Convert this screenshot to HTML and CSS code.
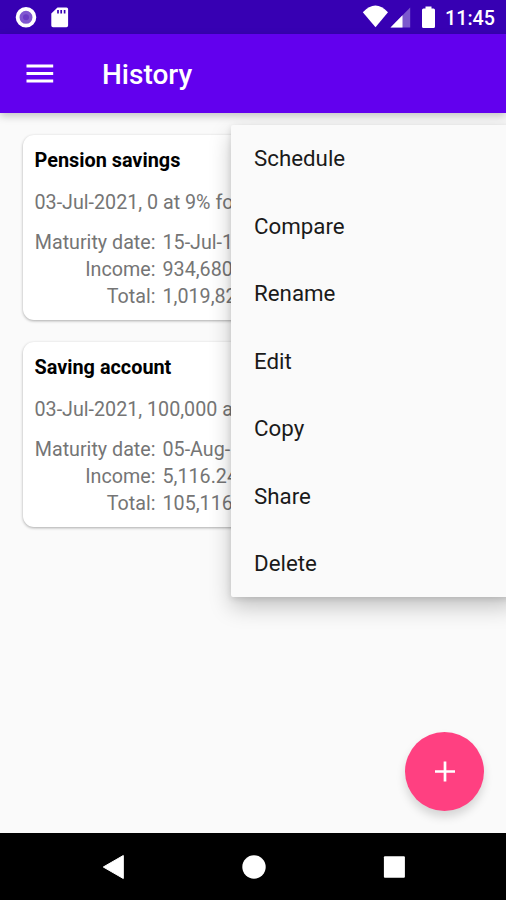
FILE: index.html
```html
<!DOCTYPE html>
<html lang="en">
<head>
<meta charset="utf-8">
<title>History</title>
<link rel="stylesheet" href="styles.css">
</head>
<body>
<div class="screen">
  <div class="status-bar">
    <svg class="status-left" width="56" height="34" viewBox="0 0 56 34">
      <circle cx="11" cy="17.3" r="8.4" fill="#8057d0" stroke="#fff" stroke-width="3.8"/>
      <circle cx="11" cy="17.3" r="3" fill="#6a3bc4"/>
      <path d="M42.500 7.500H51.500a1.600 1.600 0 0 1 1.600 1.600V25.500a1.700 1.700 0 0 1-1.700 1.700H38a1.700 1.700 0 0 1-1.700-1.700V13.500Z" fill="#fff"/>
      <path d="M43 10v3.500M46.200 10v3.500M49.600 10v3.500" stroke="#3700b3" stroke-width="1.700"/>
    </svg>
    <div class="status-right">
      <svg width="76" height="34" viewBox="0 0 76 34">
        <path d="M0.800 12.200Q13.500-1.200 26 12.200L13.500 27.200Z" fill="#fff"/>
        <path d="M48.200 7.500V27.500H28.500Z" fill="#fff" fill-opacity=".35"/>
        <path d="M40.500 15.300V27.500H28.500Z" fill="#fff"/>
        <path d="M63.500 6.500H69.500V8.500H71.500a1.500 1.500 0 0 1 1.500 1.500V26.500a1.500 1.500 0 0 1-1.500 1.500H61.500a1.500 1.500 0 0 1-1.500-1.500V10a1.500 1.500 0 0 1 1.500-1.500H63.500Z" fill="#fff"/>
      </svg>
      <span class="clock">11:45</span>
    </div>
  </div>
  <header class="app-bar">
    <svg class="menu-icon" width="28" height="20" viewBox="0 0 28 20"><path d="M0.500 2H27.200M0.500 9.500H27.200M0.500 17H27.200" stroke="#fff" stroke-width="2.900"/></svg>
    <h1 class="title">History</h1>
  </header>
  <main class="content">
    <section class="card">
      <h2 class="card-title">Pension savings</h2>
      <p class="summary">03-Jul-2021, 0 at 9% for</p>
      <dl class="details">
        <dt>Maturity date:</dt><dd>15-Jul-1</dd>
        <dt>Income:</dt><dd>934,680</dd>
        <dt>Total:</dt><dd>1,019,82</dd>
      </dl>
    </section>
    <section class="card">
      <h2 class="card-title">Saving account</h2>
      <p class="summary">03-Jul-2021, 100,000 at</p>
      <dl class="details">
        <dt>Maturity date:</dt><dd>05-Aug-</dd>
        <dt>Income:</dt><dd>5,116.24</dd>
        <dt>Total:</dt><dd>105,116</dd>
      </dl>
    </section>
  </main>
  <nav class="nav-bar">
    <svg width="24" height="26" viewBox="0 0 24 26"><path d="M1.300 13L21.300 1.500V24.500Z" fill="#fff" stroke="#fff" stroke-linejoin="round"/></svg>
    <svg width="24" height="26" viewBox="0 0 24 26"><circle cx="12" cy="13" r="11.700" fill="#fff"/></svg>
    <svg width="24" height="26" viewBox="0 0 24 26"><rect x="1.900" y="2.200" width="21" height="21.500" rx="1" fill="#fff"/></svg>
  </nav>
  <ul class="popup">
    <li>Schedule</li>
    <li>Compare</li>
    <li>Rename</li>
    <li>Edit</li>
    <li>Copy</li>
    <li>Share</li>
    <li>Delete</li>
  </ul>
  <button class="fab" aria-label="Add">
    <svg width="22" height="22" viewBox="0 0 22 22"><path d="M11 0.500V20.500M1 10.500H21" stroke="#fff" stroke-width="2.700"/></svg>
  </button>
</div>
</body>
</html>
```
FILE: styles.css
```css
* {
  box-sizing: border-box;
  margin: 0;
  padding: 0;
}

body {
  font-family: Roboto, "Liberation Sans", sans-serif;
}

.screen {
  position: relative;
  display: flex;
  flex-direction: column;
  width: 506px;
  height: 900px;
  overflow: hidden;
  background: #fafafa;
}

.status-bar {
  display: flex;
  justify-content: space-between;
  flex: none;
  height: 34px;
  padding: 0 11px 0 15px;
  background: #3700b3;
}

.status-right {
  display: flex;
}

.clock {
  width: 57px;
  color: #fff;
  font-size: 19.700px;
  font-weight: 500;
  line-height: 37px;
  text-align: right;
}

.app-bar {
  display: flex;
  align-items: center;
  flex: none;
  height: 79px;
  padding-left: 26px;
  background: #6200ee;
  box-shadow: 0 3px 8px rgba(0, 0, 0, 0.22);
}

.title {
  margin-left: 48px;
  padding-top: 2px;
  color: #fff;
  font-size: 28px;
  font-weight: 500;
}

.content {
  display: flex;
  flex-direction: column;
  flex: 1;
  gap: 22px;
  padding: 22px 23px;
}

.card {
  height: 185px;
  padding: 13px 11.500px 0;
  border-radius: 11px;
  background: #fff;
  box-shadow: 0 1px 3px rgba(0, 0, 0, 0.32);
  color: #757575;
  font-size: 19.700px;
  line-height: 26.700px;
  white-space: nowrap;
}

.card-title {
  color: #000;
  font-size: 19.850px;
  font-weight: 700;
}

.summary {
  margin: 15px 0 14px;
}

.details {
  display: grid;
  grid-template-columns: 121px auto;
  column-gap: 7px;
}

.details dt {
  text-align: right;
}

.nav-bar {
  display: flex;
  align-items: center;
  justify-content: space-between;
  flex: none;
  height: 67px;
  padding: 0 100px 0 102px;
  background: #000;
}

.popup {
  position: absolute;
  top: 125px;
  right: -9px;
  width: 284px;
  height: 472px;
  border-radius: 2px;
  background: #fafafa;
  box-shadow: 0 10px 22px rgba(0, 0, 0, 0.22), 0 2px 6px rgba(0, 0, 0, 0.12);
  list-style: none;
}

.popup li {
  height: 67.500px;
  padding-left: 23px;
  color: #1a1a1a;
  font-size: 22.300px;
  line-height: 67.500px;
}

.fab {
  position: absolute;
  top: 732px;
  left: 405px;
  display: flex;
  align-items: center;
  justify-content: center;
  width: 79px;
  height: 79px;
  border: 0;
  border-radius: 50%;
  background: #ff4081;
  box-shadow: 0 6px 10px rgba(0, 0, 0, 0.15);
}
```
